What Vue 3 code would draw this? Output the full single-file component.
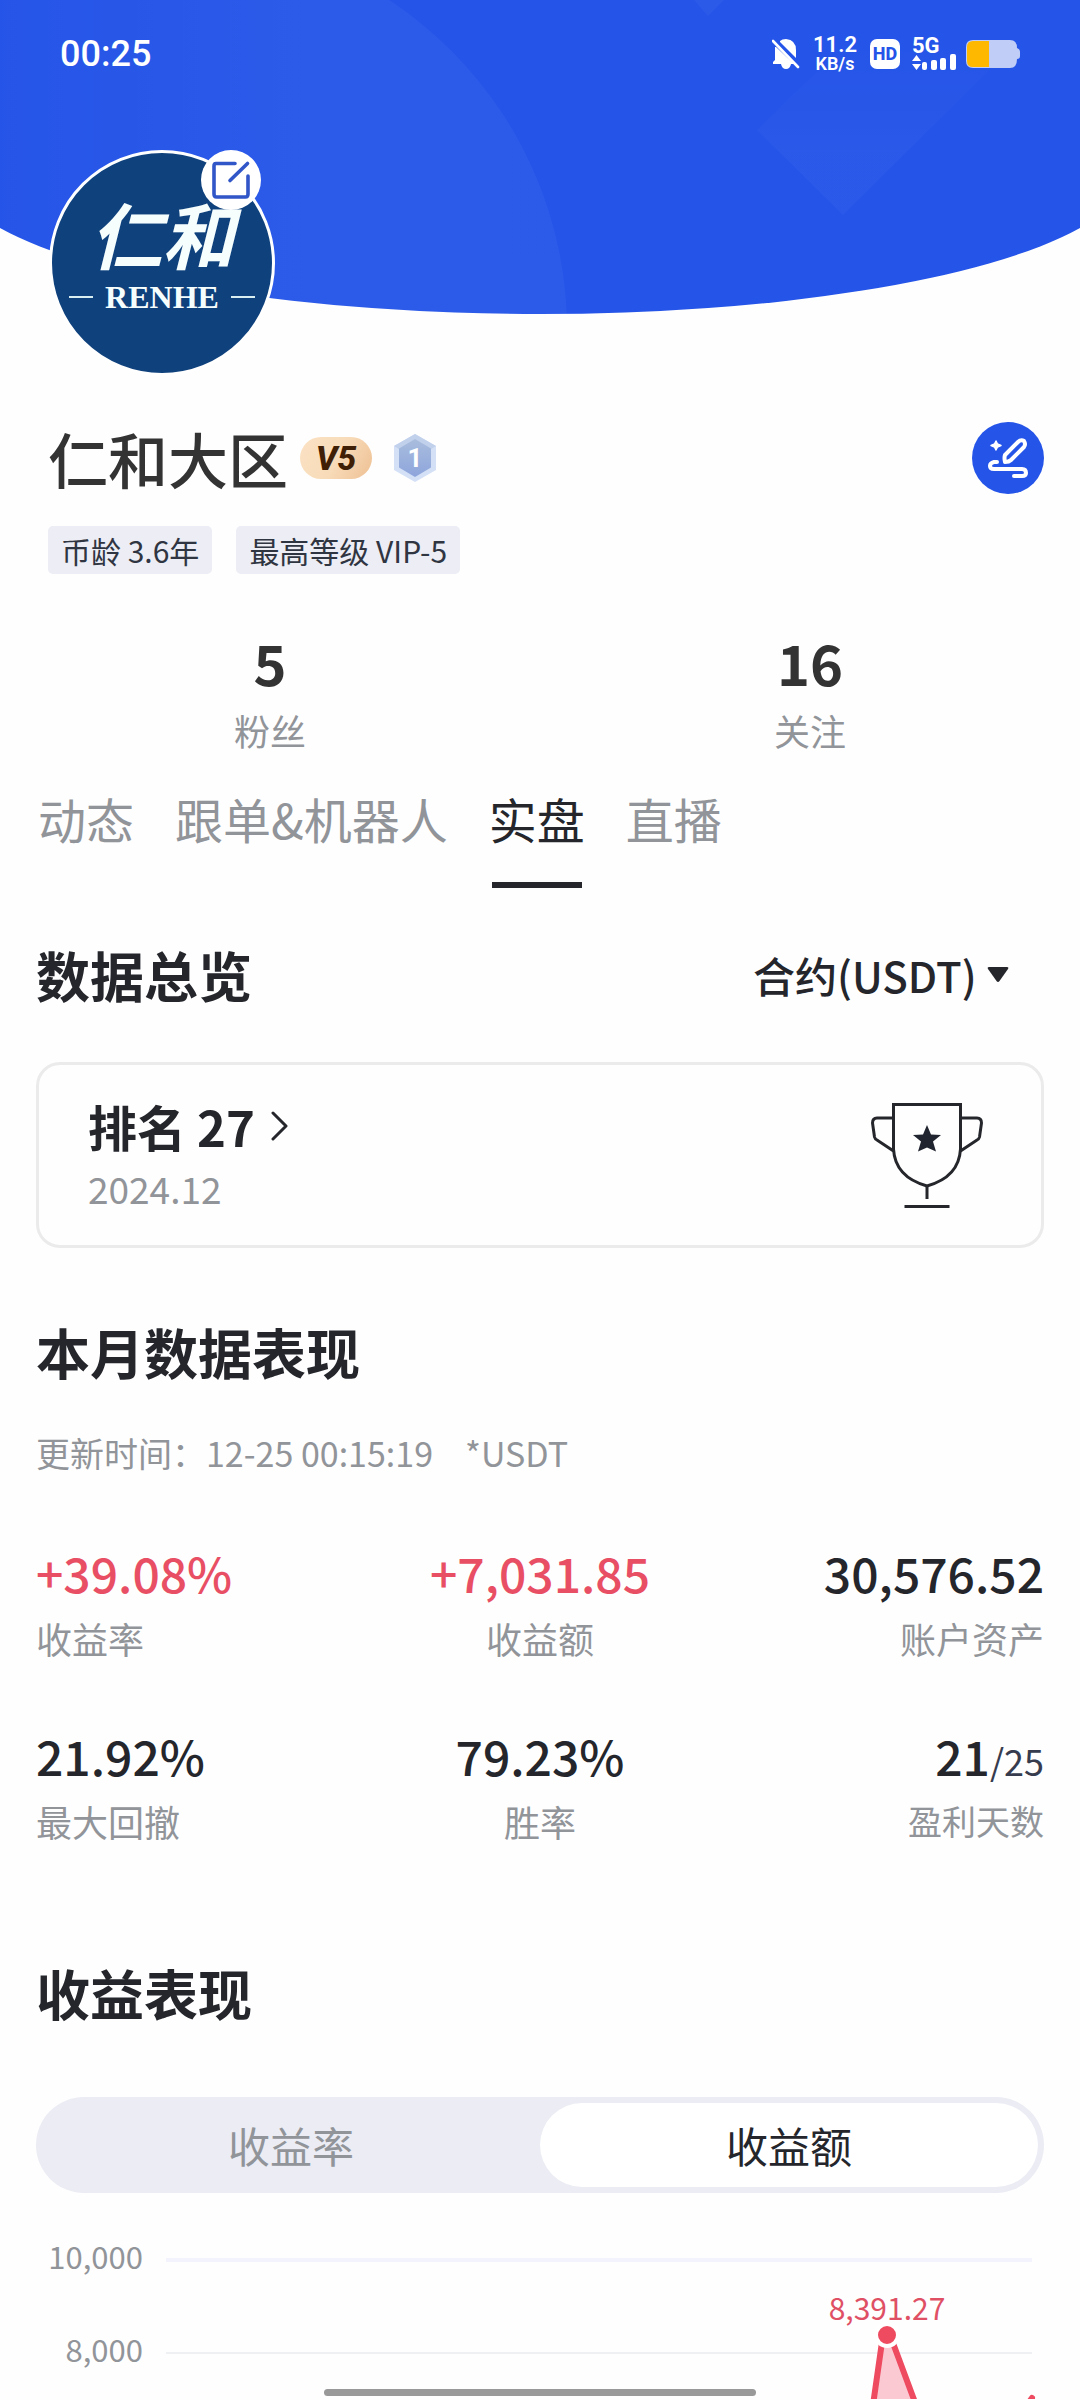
<script setup>
import { ref } from 'vue'

const stats = [
  { value: '5', label: '粉丝' },
  { value: '16', label: '关注' },
]
const tabs = ['动态', '跟单&机器人', '实盘', '直播']
const activeTab = ref('实盘')
const metrics = [
  { value: '+39.08%', label: '收益率', up: true },
  { value: '+7,031.85', label: '收益额', up: true },
  { value: '30,576.52', label: '账户资产' },
  { value: '21.92%', label: '最大回撤' },
  { value: '79.23%', label: '胜率' },
  { value: '21', total: '/25', label: '盈利天数', compact: true },
]
const segments = ['收益率', '收益额']
const activeSegment = ref('收益额')
const contract = ref('usdt')
</script>

<template>
  <div class="page">
    <header class="hero">
      <svg class="hero-bg" viewBox="0 0 1080 315" preserveAspectRatio="none" aria-hidden="true">
        <defs>
          <linearGradient id="disc" x1="0" y1="0" x2="1" y2="0">
            <stop offset="0.2" stop-color="#fff" stop-opacity="0" />
            <stop offset="0.7" stop-color="#fff" stop-opacity="0.04" />
          </linearGradient>
          <linearGradient id="gem" x1="0" y1="0" x2="0" y2="1">
            <stop offset="0.1" stop-color="#fff" stop-opacity="0" />
            <stop offset="0.7" stop-color="#fff" stop-opacity="0.03" />
          </linearGradient>
          <clipPath id="dome"><path d="M0 0H1080V228A590 144 0 0 1 0 228Z" /></clipPath>
        </defs>
        <g clip-path="url(#dome)">
          <rect width="1080" height="315" fill="#2454e8" />
          <circle cx="172" cy="330" r="395" fill="url(#disc)" />
          <path d="M843 215L1060 0H890L757 130Z" fill="url(#gem)" />
          <path d="M694 0H724L708 16Z" fill="#fff" opacity="0.04" />
        </g>
      </svg>

      <div class="status">
        <time class="clock">00:25</time>
        <div class="status-icons">
          <svg width="28" height="32" viewBox="0 0 28 32">
            <path d="M8 3Q10 1 14 1Q24 2 24 12V20L8 4Z" fill="#fff" />
            <path d="M3 9V22L1 24V26H9Q10 31 14 31Q18 31 19 26H22L4 9Z" fill="#fff" />
            <path d="M1 3L26 29" stroke="#fff" stroke-width="2.6" stroke-linecap="round" />
          </svg>
          <div class="speed"><span>11.2</span><small>KB/s</small></div>
          <span class="hd">HD</span>
          <div class="signal">
            <span>5G</span>
            <svg width="44" height="17" viewBox="0 0 44 17" fill="#fff">
              <path d="M0 7L4.500 1L9 7ZM0 10H9L4.500 16Z" />
              <rect x="10" y="8" width="5" height="8" rx="2" />
              <rect x="19" y="6" width="6" height="10" rx="2" />
              <rect x="28" y="4" width="6" height="12" rx="2" />
              <rect x="38" y="0" width="6" height="16" rx="2" />
            </svg>
          </div>
          <svg width="54" height="28" viewBox="0 0 54 28">
            <path d="M7 0H44Q51 0 51 8Q54 9 54 12V16Q54 19 51 19Q51 28 44 28H7Q0 28 0 21V7Q0 0 7 0Z" fill="#bfcdf7" />
            <path d="M7 1H23V27H7Q1 27 1 21V7Q1 1 7 1Z" fill="#ffb800" />
          </svg>
        </div>
      </div>

      <div class="avatar">
        <div class="logo">
          <span class="logo-cn">仁和</span>
          <span class="logo-en">RENHE</span>
        </div>
        <button class="edit" aria-label="编辑头像">
          <svg width="40" height="40" viewBox="0 0 40 40" fill="none" stroke="#3156c8" stroke-width="3.600" stroke-linecap="round" stroke-linejoin="round">
            <path d="M24 3.500H5Q3 3.500 3 6V34Q3 37 5.500 37H34.500Q37 37 37 34V16" />
            <path d="M19 20.500L36.500 3.500" />
          </svg>
        </button>
      </div>
    </header>

    <section class="profile">
      <div class="name-row">
        <h1>仁和大区</h1>
        <span class="vip">V5</span>
        <svg width="46" height="50" viewBox="0 0 46 50">
          <defs>
            <linearGradient id="hex" x1="0" y1="0" x2="0" y2="1">
              <stop offset="0" stop-color="#a9bddd" />
              <stop offset="1" stop-color="#8ea5dc" />
            </linearGradient>
          </defs>
          <path d="M23 1L44 13V37L23 49L2 37V13Z" fill="#d3e0f6" />
          <path d="M23 1L44 13L39 16L23 7L7 16L2 13Z" fill="#c1d1ec" />
          <path d="M23 6L39 15.500V34.500L23 44L7 34.500V15.500Z" fill="url(#hex)" />
          <text x="23" y="34" text-anchor="middle" class="hex-num">1</text>
        </svg>
        <button class="compose" aria-label="发布">
          <svg width="72" height="72" viewBox="0 0 72 72" fill="none" stroke="#fff" stroke-width="4" stroke-linecap="round" stroke-linejoin="round">
            <path d="M33 33L46 20Q49 17 52 19Q54 22 52 25L39 38Q37 40 33 40Q32 36 33 33Z" />
            <path d="M25 40H22Q18 41 18 44Q18 47 22 47H50Q54 47 54 51Q54 54 50 54H42" />
            <path d="M24 19L25.500 22L29 23.500L25.500 25L24 28L22.500 25L19 23.500L22.500 22Z" fill="#fff" stroke-width="1.500" />
          </svg>
        </button>
      </div>
      <div class="tags">
        <span>币龄 3.6年</span>
        <span>最高等级 VIP-5</span>
      </div>
    </section>

    <section class="stats">
      <div v-for="s in stats" :key="s.label">
        <strong>{{ s.value }}</strong>
        <span>{{ s.label }}</span>
      </div>
    </section>

    <nav class="tabs">
      <button v-for="t in tabs" :key="t" :class="{ active: t === activeTab }" @click="activeTab = t">{{ t }}</button>
    </nav>

    <main class="content">
      <div class="overview">
        <h2>数据总览</h2>
        <label class="contract">
          <select v-model="contract" aria-label="合约类型">
            <option value="usdt">合约(USDT)</option>
          </select>
          <svg width="22" height="16" viewBox="0 0 22 16"><path d="M2 0H20Q22 0 21 2L12.500 14Q11 16 9.500 14L1 2Q0 0 2 0Z" fill="#24262c" /></svg>
        </label>
      </div>

      <a class="rank" href="#">
        <div>
          <div class="rank-title">
            排名 27
            <svg width="18" height="30" viewBox="0 0 18 30" fill="none" stroke="#24262c" stroke-width="3" stroke-linecap="round" stroke-linejoin="round"><path d="M2 2L15 15L2 28" /></svg>
          </div>
          <div class="rank-date">2024.12</div>
        </div>
        <svg class="trophy" width="112" height="106" viewBox="0 0 112 106" fill="none" stroke="#24262c" stroke-width="3">
          <path d="M22.500 1.500H89.500V46Q88 74 56 83Q24 74 22.500 46Z" />
          <path d="M22.500 15H6Q1.500 15 1.500 20L3.500 34Q4 36 6 37L22.500 48M89.500 15H106Q110.500 15 110.500 20L108.500 34Q108 36 106 37L89.500 48M56 83V96M33.500 103.500H78.500" />
          <path d="M56 22L60 31.500L70 32L62 38.500L65 48.500L56 44.500L47 48.500L50 38.500L42 32L52 31.500Z" fill="#20242e" stroke="none" />
        </svg>
      </a>

      <h2 class="month">本月数据表现</h2>
      <p class="updated"><span>更新时间：12-25 00:15:19</span><span>*USDT</span></p>

      <dl class="metrics">
        <div v-for="m in metrics" :key="m.label">
          <dd :class="{ up: m.up }">{{ m.value }}<small v-if="m.total">{{ m.total }}</small></dd>
          <dt :class="{ compact: m.compact }">{{ m.label }}</dt>
        </div>
      </dl>

      <h2 class="income">收益表现</h2>
      <div class="segment">
        <button v-for="s in segments" :key="s" :class="{ active: s === activeSegment }" @click="activeSegment = s">{{ s }}</button>
      </div>
    </main>

    <svg class="chart" viewBox="0 0 1080 206">
      <path d="M166 67H1032" stroke="#f3f3fd" stroke-width="4" />
      <path d="M166 160H1032" stroke="#eef0f4" stroke-width="2" />
      <g class="axis" text-anchor="end">
        <text x="143" y="76">10,000</text>
        <text x="143" y="169">8,000</text>
      </g>
      <path d="M874 207L884 142H890L915 207Z" fill="#fbc9d2" />
      <path d="M873 212L883 142M890 142L916 212" stroke="#ee4a60" stroke-width="6" />
      <circle cx="887" cy="142" r="11" fill="#ee4a60" stroke="#fff" stroke-width="4" />
      <text class="peak" x="887" y="127" text-anchor="middle">8,391.27</text>
      <path d="M1027 212L1032 205" stroke="#ee4a60" stroke-width="6" stroke-linecap="round" />
    </svg>
    <div class="home-bar"></div>
  </div>
</template>

<style>
body {
  margin: 0;
  background: #fefefe;
}
</style>

<style scoped>
.page {
  position: relative;
  overflow: hidden;
  font-family: "Noto Sans CJK SC", "Noto Sans", sans-serif;
  color: #24262c;
}
h1, h2, p, dl, dd {
  margin: 0;
}
button, select {
  padding: 0;
  border: 0;
  background: none;
  color: inherit;
  font: inherit;
}
svg {
  display: block;
  flex: none;
}
.hero {
  position: relative;
}
.hero-bg {
  position: absolute;
  top: 0;
  left: 0;
  width: 100%;
  height: 315px;
}
.status {
  position: relative;
  display: flex;
  align-items: center;
  justify-content: space-between;
  height: 108px;
  padding: 0 60px;
  color: #fff;
  font-family: Roboto, sans-serif;
}
.clock {
  font-size: 36px;
  font-weight: 500;
}
.status-icons {
  display: flex;
  align-items: center;
  gap: 12px;
}
.speed {
  display: flex;
  flex-direction: column;
  align-items: center;
  width: 46px;
  font-size: 22px;
  font-weight: 600;
  line-height: 20px;
}
.speed small {
  font-size: 18px;
  line-height: 18px;
}
.hd {
  width: 30px;
  border-radius: 7px;
  background: #fff;
  color: #2454e8;
  font-size: 18px;
  font-weight: 800;
  line-height: 30px;
  text-align: center;
}
.signal span {
  display: block;
  font-size: 22px;
  font-weight: 700;
  line-height: 16px;
}
.signal {
  width: 44px;
  margin-right: -2px;
}
.avatar {
  position: relative;
  box-sizing: border-box;
  width: 226px;
  height: 226px;
  margin: 42px 0 0 49px;
  border: 3px solid #fff;
  border-radius: 50%;
  background: #0f417d;
  color: #f5fdfd;
}
.logo {
  display: flex;
  flex-direction: column;
  align-items: center;
  padding-top: 46px;
}
.logo-cn {
  font-family: "Liberation Serif", "Noto Sans CJK SC", sans-serif;
  font-size: 72px;
  font-weight: 700;
  font-style: italic;
  line-height: 82px;
}
.logo-en {
  display: flex;
  align-items: center;
  gap: 12px;
  font-family: "Liberation Serif", serif;
  font-size: 32px;
  font-weight: 700;
  line-height: 32px;
}
.logo-en::before, .logo-en::after {
  content: "";
  width: 24px;
  height: 2px;
  background: #d9eef0;
}
.edit {
  position: absolute;
  top: -3px;
  right: 11px;
  display: grid;
  place-items: center;
  width: 60px;
  height: 60px;
  border-radius: 50%;
  background: #fff;
}
.profile {
  padding: 46px 36px 0 48px;
}
.name-row {
  display: flex;
  align-items: center;
  height: 72px;
}
h1 {
  color: #333;
  font-size: 60px;
  font-weight: 500;
  line-height: 72px;
}
.vip {
  width: 72px;
  margin: 0 20px 0 12px;
  border-radius: 21px;
  background: linear-gradient(120deg, #fbe2c3, #f8dcba 50%, #eec093);
  color: #3f1f05;
  font-family: Roboto, sans-serif;
  font-size: 34px;
  font-style: italic;
  font-weight: 800;
  line-height: 42px;
  text-align: center;
}
.hex-num {
  fill: #fff;
  font-family: Roboto, sans-serif;
  font-size: 26px;
  font-weight: 700;
}
.compose {
  width: 72px;
  height: 72px;
  margin-left: auto;
  border-radius: 50%;
  background: #2454e8;
}
.tags {
  display: flex;
  gap: 24px;
  margin-top: 32px;
}
.tags span {
  padding: 0 13px;
  border-radius: 5px;
  background: #ecedf5;
  color: #303542;
  font-size: 30px;
  line-height: 48px;
}
.stats {
  display: flex;
  margin-top: 52px;
}
.stats div {
  flex: 1;
  display: flex;
  flex-direction: column;
  align-items: center;
  gap: 8px;
}
.stats strong {
  color: #333;
  font-size: 56px;
  line-height: 72px;
}
.stats span {
  color: #919499;
  font-size: 36px;
  line-height: 48px;
}
.tabs {
  display: flex;
  gap: 41px;
  margin-top: 32px;
  padding: 0 38px;
}
.tabs button {
  padding-bottom: 38px;
  color: #919499;
  font-size: 48px;
  line-height: 64px;
}
.tabs .active {
  background: linear-gradient(#24262c, #24262c) bottom / 90px 6px no-repeat;
  color: #24262c;
}
.content {
  padding: 51px 36px 0;
}
.overview {
  display: flex;
  align-items: center;
  justify-content: space-between;
}
h2 {
  font-size: 54px;
  font-weight: 700;
  line-height: 72px;
}
.contract {
  display: flex;
  align-items: center;
  gap: 10px;
  padding-right: 35px;
}
.contract select {
  appearance: none;
  font-size: 42px;
  font-weight: 500;
  line-height: 60px;
}
.rank {
  display: flex;
  align-items: center;
  justify-content: space-between;
  margin-top: 51px;
  padding: 29px 58px 33px 49px;
  border: 3px solid #ebebec;
  border-radius: 24px;
  color: inherit;
  text-decoration: none;
}
.rank-title {
  display: flex;
  align-items: center;
  gap: 16px;
  font-size: 49px;
  font-weight: 700;
  line-height: 64px;
}
.trophy {
  margin-top: 6px;
}
.rank-date {
  margin-top: 6px;
  color: #919499;
  font-size: 37px;
  line-height: 48px;
}
.month {
  margin-top: 68px;
}
.updated {
  display: flex;
  gap: 32px;
  margin-top: 41px;
  color: #919499;
  font-size: 34px;
  line-height: 48px;
}
.metrics {
  display: grid;
  grid-template-columns: repeat(3, 1fr);
  row-gap: 61px;
  margin-top: 63px;
}
.metrics div {
  display: flex;
  flex-direction: column;
  gap: 10px;
}
.metrics div:nth-child(3n + 2) {
  align-items: center;
}
.metrics div:nth-child(3n) {
  align-items: flex-end;
}
dd {
  font-size: 48px;
  font-weight: 500;
  line-height: 64px;
}
dd small {
  color: #363c4e;
  font-size: 36px;
  font-weight: 400;
  line-height: 36px;
}
.up {
  color: #e94f64;
}
dt {
  color: #919499;
  font-size: 36px;
  line-height: 48px;
}
.compact {
  font-size: 34px;
}
.income {
  margin-top: 112px;
}
.segment {
  display: flex;
  margin-top: 68px;
  padding: 6px;
  border-radius: 48px;
  background: #ebecf4;
}
.segment button {
  flex: 1;
  border-radius: 42px;
  color: #919499;
  font-size: 42px;
  line-height: 84px;
}
.segment .active {
  background: #fff;
  color: #24262c;
}
.chart {
  width: 100%;
}
.axis {
  fill: #919499;
  font-size: 31px;
}
.peak {
  fill: #df5065;
  font-size: 30px;
}
.home-bar {
  position: absolute;
  bottom: 3px;
  left: 30%;
  width: 40%;
  height: 7px;
  border-radius: 4px;
  background: #999;
}
</style>
